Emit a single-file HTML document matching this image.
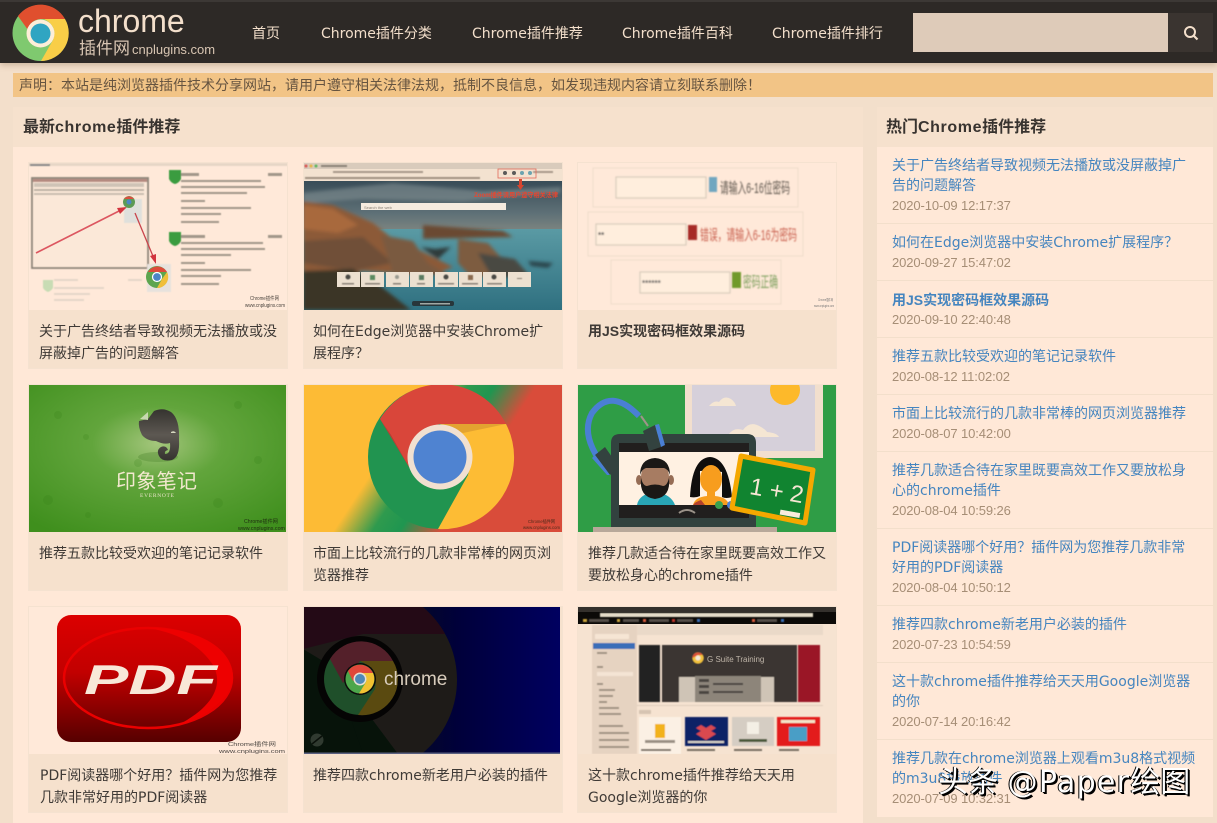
<!DOCTYPE html>
<html lang="zh"><head><meta charset="utf-8"><title>chrome插件网</title>
<style>
*{margin:0;padding:0;box-sizing:border-box}
html,body{width:1217px;height:823px;overflow:hidden;background:#f3dfcb}
body{position:relative;font-family:"Liberation Sans","Noto Sans CJK SC",sans-serif;font-size:14px;color:#3f3a36}
.a{position:absolute;white-space:nowrap}
#hd{left:0;top:0;width:1217px;height:63px;background:#2d2926;border-top:2px solid #3c3835;box-shadow:0 2px 6px rgba(90,60,30,.28)}
.nav{top:24px;height:20px;line-height:20px;color:#f3dfcb;font-size:14px;font-family:"DejaVu Sans","Noto Sans CJK SC",sans-serif}
#side-l{left:13px;top:107px;width:850px;height:716px;background:#ffe8d7}
.hh{height:40px;background:#f6e1cd;font-size:16px;font-weight:bold;line-height:42px;color:#38332f}
.hh i{font-style:normal;letter-spacing:.6px}
.card{position:absolute;width:260px;height:207px;background:#f6e1cd;border:1px solid #f5e2d0}
.card svg{position:absolute;left:0;top:0;display:block;width:258px;height:147px}
.card p{position:absolute;left:10px;top:158px;line-height:22px;white-space:nowrap;font-size:14px;color:#3f3a36;font-family:"DejaVu Sans","Noto Sans CJK SC",sans-serif}
.it{position:absolute;left:877px;width:336px;border-top:1px solid #f3dfcb;padding-left:15px;padding-top:9px}
.it a{display:block;color:#4585bf;line-height:20px;font-size:14px;white-space:nowrap;font-family:"DejaVu Sans","Noto Sans CJK SC",sans-serif}
.it span{display:block;color:#a68e76;line-height:20px;font-size:13px;white-space:nowrap;letter-spacing:-.1px}
#wm{left:938px;top:763px;font-size:30px;line-height:40px;color:#fff;text-shadow:2px 2px 0 #000,1px 1px 0 #000,-1px 0 0 #000;font-family:"DejaVu Sans","Noto Sans CJK SC",sans-serif}
#wm i{font-style:normal;letter-spacing:1.300px}
</style></head><body>

<div class="a" id="hd"></div>
<svg class="a" style="left:12px;top:4px" width="58" height="58" viewBox="0 0 58 58">
<circle cx="28.500" cy="29" r="28" fill="#7fc96f"/>
<path d="M6 12A28 28 0 0 1 53 15L28.500 15Q18 16 16 26Z" fill="#e04f2e"/>
<path d="M53 15A28 28 0 0 1 29 57L41 36Q46 22 32 15Z" fill="#f9ce47"/>
<circle cx="28.500" cy="29.500" r="14" fill="#fdeed8"/><circle cx="28.500" cy="29.500" r="10" fill="#30a5c2"/>
</svg>
<div class="a" style="left:78px;top:1px;font-size:32px;line-height:40px;color:#f3dfcb">chrome</div>
<div class="a" style="left:79px;top:37px;font-size:17px;line-height:24px;color:#d8c5b2">插件网<span style="font-size:13px;margin-left:2px">cnplugins.com</span></div>
<div class="a nav" style="left:252px">首页</div>
<div class="a nav" style="left:321px">Chrome插件分类</div>
<div class="a nav" style="left:472px">Chrome插件推荐</div>
<div class="a nav" style="left:622px">Chrome插件百科</div>
<div class="a nav" style="left:772px">Chrome插件排行</div>
<div class="a" style="left:913px;top:13px;width:255px;height:39px;background:#decbb9"></div>
<div class="a" style="left:1168px;top:13px;width:45px;height:39px;background:#3a3430"></div>
<svg class="a" style="left:1183px;top:25px" width="16" height="16" viewBox="0 0 16 16"><circle cx="7" cy="7" r="5" fill="none" stroke="#f3dfcb" stroke-width="2"/><path d="M10.500 10.500L14.500 14.500" stroke="#f3dfcb" stroke-width="2.200"/></svg>

<div class="a" style="left:13px;top:73px;width:1200px;height:24px;background:#f2c486;line-height:24px;padding-left:6px;color:#665440">声明&#xFF1A;本站是纯浏览器插件技术分享网站&#xFF0C;请用户遵守相关法律法规&#xFF0C;抵制不良信息&#xFF0C;如发现违规内容请立刻联系删除&#xFF01;</div>

<div class="a" id="side-l"><div class="hh" style="padding-left:10px">最新<i>chrome</i>插件推荐</div></div>
<div class="a hh" style="left:877px;top:107px;width:336px;padding-left:9px">热门<i>Chrome</i>插件推荐</div>
<div class="a" style="left:877px;top:147px;width:336px;height:670px;background:#ffe8d7"></div>

<!-- Card 1 -->
<div class="card" style="left:28px;top:162px">
<svg viewBox="1 0 258 147"><rect width="260" height="147" fill="#ffe9d9"/>
<g filter="url(#b1)">
<rect width="260" height="3" fill="#e6d6c6"/><rect x="2" y="1" width="20" height="2" fill="#888"/>
<rect x="4" y="15" width="116" height="90" fill="#fbe8d8" stroke="#8d8478" stroke-width="1.800"/>
<rect x="5" y="16" width="114" height="3" fill="#b58a80"/><rect x="6" y="20" width="110" height="4" fill="#cfc3b6"/><rect x="6" y="26" width="110" height="2" fill="#bcb0a3"/><rect x="6" y="30" width="110" height="2" fill="#c8bcaf"/>
<g fill="#3a9c40"><path d="M141 7h12v9q-2 4-6 5q-4-1-6-5z"/><path d="M141 69h12v9q-2 4-6 5q-4-1-6-5z"/></g>
<path d="M15 117h10v8q-2 3-5 4q-3-1-5-4z" fill="#c8dcb4"/>
<g fill="#a2978a"><rect x="153" y="10" width="18" height="3"/><rect x="153" y="17" width="80" height="2"/><rect x="153" y="23" width="84" height="2"/><rect x="153" y="29" width="66" height="2"/><rect x="153" y="37" width="24" height="2"/><rect x="153" y="44" width="70" height="2"/><rect x="153" y="50" width="40" height="2"/><rect x="153" y="58" width="38" height="2"/><rect x="240" y="10" width="14" height="3"/>
<rect x="153" y="72" width="24" height="3"/><rect x="153" y="79" width="82" height="2"/><rect x="153" y="85" width="84" height="2"/><rect x="153" y="91" width="50" height="2"/><rect x="153" y="99" width="24" height="2"/><rect x="153" y="106" width="70" height="2"/><rect x="153" y="112" width="40" height="2"/><rect x="153" y="120" width="38" height="2"/><rect x="240" y="72" width="14" height="3"/></g>
<g fill="#e5d7c8"><rect x="26" y="116" width="24" height="2"/><rect x="26" y="124" width="50" height="2"/><rect x="26" y="130" width="36" height="2"/><rect x="26" y="136" width="30" height="2"/><rect x="100" y="116" width="14" height="2"/></g>
<rect x="96" y="36" width="18" height="24" fill="#dfe0dc"/>
</g>
<path d="M8 90L97 45" stroke="#dc5660" stroke-width="1.600"/><path d="M99 44L89 45L92 51Z" fill="#d2343e"/>
<path d="M107 50L127 98" stroke="#c9444c" stroke-width="1.300"/><path d="M128 101L122 93L128 91Z" fill="#d2343e"/>
<circle cx="101" cy="39" r="6" fill="#5c9a55"/><path d="M96 36a6 6 0 0 1 10 0h-5z" fill="#d9503f"/><circle cx="101" cy="39" r="2.500" fill="#4c86c6"/>
<rect x="119" y="101" width="24" height="28" fill="#e7e2dd" filter="url(#b1)"/>
<circle cx="129" cy="114" r="11" fill="#5da54f"/><path d="M120 109a11 11 0 0 1 19 0h-10z" fill="#dd4b3a"/><path d="M139 109a11 11 0 0 1-10 16l5-9z" fill="#f0bf3a"/><circle cx="129" cy="114" r="4.500" fill="#4c86c6" stroke="#fff" stroke-width="1.200"/>
<text x="222" y="137" font-size="5" fill="#4c453f" textLength="29" lengthAdjust="spacingAndGlyphs">Chrome插件网</text><text x="217" y="144" font-size="5" fill="#4c453f" textLength="40" lengthAdjust="spacingAndGlyphs">www.cnplugins.com</text>
</svg><p>关于广告终结者导致视频无法播放或没<br>屏蔽掉广告的问题解答</p></div>

<!-- Card 2 -->
<div class="card" style="left:303px;top:162px">
<svg viewBox="1 0 258 147"><defs>
<linearGradient id="sk" x1="0" y1="0" x2="0" y2="1"><stop offset="0" stop-color="#384c57"/><stop offset=".55" stop-color="#5f7177"/><stop offset="1" stop-color="#8f9186"/></linearGradient>
<linearGradient id="wt" x1="0" y1="0" x2="0" y2="1"><stop offset="0" stop-color="#5a9aa4"/><stop offset="1" stop-color="#2f7080"/></linearGradient>
<filter id="b1"><feGaussianBlur stdDeviation=".5"/></filter><filter id="b2"><feGaussianBlur stdDeviation="1.800"/></filter><filter id="b3"><feGaussianBlur stdDeviation=".8"/></filter>
</defs>
<rect y="18" width="260" height="60" fill="url(#sk)"/><rect y="66" width="260" height="81" fill="url(#wt)"/>
<g filter="url(#b2)">
<path d="M0 30L90 20L180 28L258 24V30L160 38L60 36L0 40Z" fill="#8d9a9c" opacity=".5"/>
<path d="M120 62L200 68L210 74L120 76Z" fill="#6a4a30"/>
<path d="M0 38L30 42L70 60L95 80L118 88L150 104L130 112L60 108L0 118Z" fill="#8c5a38"/>
<path d="M0 42L30 46L55 62L35 70L0 66Z" fill="#a8693c"/>
<path d="M0 78L60 74L90 100L50 108L0 100Z" fill="#6f5038"/>
<path d="M78 72L110 78L125 100L145 112L90 112Z" fill="#7a5a40"/>
<path d="M155 76L185 80L210 108L170 116L155 100Z" fill="#7d5c40"/>
<path d="M175 90L212 96L226 112L190 116Z" fill="#4a4a42"/>
<path d="M0 108L50 106L80 125L108 147H0Z" fill="#3a3528"/>
<path d="M118 84L132 86L148 84L135 96Z" fill="#2f3a3a"/>
<path d="M225 98L250 100L245 105L228 103Z" fill="#2c444c"/>
</g>
<rect width="260" height="18" fill="#f3e2d0"/><rect width="260" height="6" fill="#d9cbbc"/>
<g filter="url(#b1)"><circle cx="3" cy="3" r="1.500" fill="#d9534f"/><circle cx="8" cy="3" r="1.500" fill="#e7b33f"/><circle cx="13" cy="3" r="1.500" fill="#5cb65c"/><rect x="18" y="2" width="26" height="2" fill="#8d8478"/><rect x="30" y="8" width="90" height="2" fill="#a89a8b"/><rect x="2" y="14" width="175" height="2" fill="#a09282"/><rect x="230" y="8" width="20" height="2" fill="#a89a8b"/></g>
<rect x="195" y="6" width="38" height="9" fill="none" stroke="#e26a5a" stroke-width=".8"/><g fill="#5a5a5a"><circle cx="202" cy="10" r="2"/><circle cx="211" cy="10" r="2"/><circle cx="219" cy="10" r="2" fill="#6ba3b0"/><circle cx="227" cy="10" r="2" fill="#6ba3b0"/></g>
<path d="M216 16h3v6h2l-3.500 5l-3.500-5h2z" fill="#d6452f"/>
<text x="171" y="34" font-size="6.500" font-weight="bold" fill="#e8452f" textLength="84" lengthAdjust="spacingAndGlyphs">Zoom插件请用户遵守相关法律</text>
<rect x="58" y="40" width="145" height="7" fill="#f5ebdf"/><text x="61" y="46" font-size="4" fill="#8a8177">Search the web</text>
<g fill="#ece0d0">
<rect x="34" y="109" width="23" height="15"/><rect x="58" y="109" width="23" height="15"/><rect x="83" y="109" width="23" height="15"/><rect x="107" y="109" width="23" height="15"/><rect x="132" y="109" width="23" height="15"/><rect x="156" y="109" width="23" height="15"/><rect x="180" y="109" width="23" height="15"/><rect x="205" y="109" width="23" height="15"/></g>
<g fill="#4a4a44" filter="url(#b1)"><circle cx="45" cy="114" r="2.500"/><rect x="67" y="112" width="5" height="5" fill="#5a8a60"/><circle cx="94" cy="114" r="2" fill="#9a9a90"/><rect x="116" y="112" width="5" height="5" fill="#5a7a60"/><circle cx="143" cy="114" r="2.500"/><rect x="165" y="112" width="5" height="5" fill="#8a6a50"/><circle cx="191" cy="114" r="2.500"/><rect x="39" y="120" width="12" height="1.500" fill="#8a8177"/><rect x="62" y="120" width="15" height="1.500" fill="#8a8177"/><rect x="90" y="120" width="8" height="1.500" fill="#8a8177"/><rect x="114" y="120" width="8" height="1.500" fill="#8a8177"/><rect x="135" y="120" width="16" height="1.500" fill="#8a8177"/><rect x="159" y="120" width="16" height="1.500" fill="#8a8177"/><rect x="184" y="120" width="15" height="1.500" fill="#8a8177"/><rect x="214" y="115" width="5" height="1" fill="#8a8177"/></g>
<rect x="109" y="138" width="42" height="5" rx="2" fill="#28363a"/><rect x="117" y="140" width="30" height="1.500" fill="#a0a8a4"/>
</svg><p style="left:9px">如何在Edge浏览器中安装Chrome扩<br>展程序&#xFF1F;</p></div>

<!-- Card 3 -->
<div class="card" style="left:577px;top:162px">
<svg viewBox="1 0 258 147"><rect width="260" height="147" fill="#ffe9d9"/>
<g filter="url(#b3)">
<rect x="16" y="5" width="205" height="39" fill="none" stroke="#efdccb"/><rect x="39" y="14" width="90" height="21" fill="#ffeedd" stroke="#d8cbbb" stroke-width="1.200"/><rect x="132" y="14" width="8" height="15" fill="#6fa6c0"/>
<text x="143" y="30" font-size="15" fill="#5e564e" textLength="70" lengthAdjust="spacingAndGlyphs">请输入6-16位密码</text>
<rect x="11" y="49" width="215" height="44" fill="none" stroke="#efdccb"/><rect x="19" y="61" width="90" height="21" fill="#ffeedd" stroke="#d8cbbb" stroke-width="1.200"/><rect x="111" y="62" width="9" height="15" fill="#a62c28"/>
<text x="21" y="75" font-size="8" font-weight="bold" fill="#444">**</text>
<text x="123" y="77" font-size="15" fill="#c9604f" textLength="97" lengthAdjust="spacingAndGlyphs">错误&#xFF0C;请输入6-16为密码</text>
<rect x="34" y="97" width="170" height="44" fill="none" stroke="#efdccb"/><rect x="63" y="109" width="90" height="21" fill="#ffeedd" stroke="#d8cbbb" stroke-width="1.200"/><rect x="155" y="109" width="9" height="16" fill="#6f9a2c"/>
<text x="65" y="123" font-size="8" font-weight="bold" fill="#555">******</text>
<text x="166" y="124" font-size="15" fill="#7ea05e" textLength="35" lengthAdjust="spacingAndGlyphs">密码正确</text>
</g>
<text x="241" y="138" font-size="3.500" fill="#777" textLength="15" lengthAdjust="spacingAndGlyphs">Chrome插件网</text><text x="237" y="144" font-size="3.500" fill="#777" textLength="20" lengthAdjust="spacingAndGlyphs">www.cnplugins.com</text>
</svg><p style="font-weight:bold;top:157px;font-family:'Liberation Sans','Noto Sans CJK SC',sans-serif">用JS实现密码框效果源码</p></div>

<!-- Card 4 -->
<div class="card" style="left:28px;top:384px">
<svg viewBox="1 0 258 147"><defs><radialGradient id="ev" cx=".5" cy=".4" r=".72"><stop offset="0" stop-color="#a4c67c"/><stop offset=".35" stop-color="#62a53c"/><stop offset="1" stop-color="#3f8f1d"/></radialGradient><linearGradient id="el" x1="0" y1="0" x2="0" y2="1"><stop offset="0" stop-color="#35332f"/><stop offset=".5" stop-color="#5d5852"/><stop offset="1" stop-color="#35332f"/></linearGradient></defs>
<rect width="258" height="147" fill="url(#ev)"/>
<g fill="#2f7a12" opacity=".18"><circle cx="58" cy="52" r="3"/><circle cx="20" cy="115" r="5"/><circle cx="230" cy="75" r="4"/><circle cx="110" cy="78" r="4"/><circle cx="210" cy="20" r="4"/><circle cx="60" cy="130" r="3"/><circle cx="190" cy="118" r="5"/><circle cx="30" cy="30" r="4"/></g>
<ellipse cx="130" cy="72" rx="20" ry="5" fill="#417a25" opacity=".3"/>
<path d="M126 26Q135 22 143 27Q152 34 151 55Q152 72 144 75Q134 77 131 71Q128 65 133 62Q138 60 140 65Q136 66 137 69Q143 69 142 58Q136 60 128 56Q119 56 114 50Q110 42 111 36L120 34Z" fill="url(#el)"/>
<path d="M112 34L120 27L120 35Z" fill="#c8d8b0"/><path d="M143 47q3-2 5 1h-5z" fill="#d6d8c0"/>
<text x="88" y="103" font-size="20" fill="#f3e8cf" textLength="81" lengthAdjust="spacing">印象笔记</text>
<text x="112" y="112" font-size="5.500" font-family="Liberation Serif,serif" fill="#e9e4c8" textLength="34">EVERNOTE</text>
<text x="216" y="138" font-size="5" fill="#1d2b10" textLength="34" lengthAdjust="spacingAndGlyphs">Chrome插件网</text><text x="210" y="145" font-size="5" fill="#1d2b10" textLength="47" lengthAdjust="spacingAndGlyphs">www.cnplugins.com</text>
</svg><p>推荐五款比较受欢迎的笔记记录软件</p></div>

<!-- Card 5 -->
<div class="card" style="left:303px;top:384px">
<svg viewBox="1 0 258 147"><defs>
<linearGradient id="cb" gradientUnits="userSpaceOnUse" x1="0" y1="0" x2="210" y2="137.500"><stop offset=".42" stop-color="#fdbb35"/><stop offset=".55" stop-color="#2f9a4e"/><stop offset=".64" stop-color="#1f9650"/><stop offset=".78" stop-color="#d94c3a"/></linearGradient>
</defs>
<rect width="260" height="147" fill="url(#cb)"/>
<circle cx="137" cy="72" r="72" fill="#219450"/>
<path d="M77 34A72 72 0 0 1 203 39L137 39Q120 42 106 82Z" fill="#d9463a"/>
<path d="M203 39A72 72 0 0 1 135 144L165 90Q175 50 137 39Z" fill="#fdbc34"/>
<path d="M137 39L203 39L160 48Z" fill="#e0a030" opacity=".9"/>
<path d="M77 34L106 82L88 50Z" fill="#b23e33"/>
<circle cx="137" cy="72" r="32.500" fill="#f1e0d0"/><circle cx="137" cy="72" r="26.500" fill="#4f83d1"/>
<text x="225" y="138" font-size="4.500" fill="#4a2a1a" textLength="27" lengthAdjust="spacingAndGlyphs">Chrome插件网</text><text x="220" y="144" font-size="4.500" fill="#4a2a1a" textLength="37" lengthAdjust="spacingAndGlyphs">www.cnplugins.com</text>
</svg><p style="left:9px">市面上比较流行的几款非常棒的网页浏<br>览器推荐</p></div>

<!-- Card 6 -->
<div class="card" style="left:577px;top:384px">
<svg viewBox="1 0 258 147"><rect width="260" height="147" fill="#2f9d46"/>
<rect x="108" width="138" height="73" fill="#f2dfcd"/><rect x="115" width="123" height="66" fill="#d6d0da"/>
<circle cx="208" cy="5" r="15" fill="#fdb92a"/>
<g fill="#f5e6d3"><path d="M132 21q5-6 10-4q5-7 12-3q4 3 5 7z"/><path d="M152 49q5-7 14-4q7-10 18-3q5 3 6 5q10 1 12 5h-50z"/></g>
<path d="M34 58q0-9 9-9h127q9 0 9 9v84H34z" fill="#32423f"/>
<rect x="42" y="58" width="130" height="9" fill="#211f1e"/><rect x="42" y="67" width="130" height="53" fill="#fff1e2"/><rect x="42" y="120" width="130" height="13" fill="#211f1e"/>
<path d="M60 120q2-11 18-13q16 2 20 13z" fill="#29a6b6"/>
<ellipse cx="78" cy="92" rx="14" ry="16" fill="#a77c62"/><ellipse cx="62" cy="95" rx="3" ry="5" fill="#966d55"/><ellipse cx="94" cy="95" rx="3" ry="5" fill="#966d55"/>
<path d="M63 90q0-16 15-17q15 1 15 17q-2-6-6-7h-18q-4 1-6 7z" fill="#1a1816"/>
<path d="M64 93q2 8 6 8q8-3 16 0q4 0 6-8q2 19-14 21q-16-2-14-21z" fill="#1a1816"/>
<path d="M113 112q2-39 20-40q18 1 22 40q-6 2-10 0v-25q-10-2-22-1v25q-4 2-10 1z" fill="#0f0e0d"/>
<ellipse cx="134" cy="94" rx="11" ry="14" fill="#f79d1e"/><rect x="130" y="104" width="8" height="8" fill="#f79d1e"/>
<path d="M116 120q2-8 14-9h8q12 1 14 9z" fill="#f79d1e"/><path d="M116 120q2-3 8-5l4 5z" fill="#b3412c"/>
<circle cx="142" cy="120" r="4" fill="#3aa14f"/><circle cx="154" cy="120" r="4" fill="#4a7fd4"/>
<path d="M102 128q8-6 16 0" stroke="#9a9288" stroke-width="2" fill="none"/>
<rect x="16" y="142" width="184" height="5" fill="#b8a89a"/>
<path d="M30 85Q2 52 15 28Q34 2 62 31" fill="none" stroke="#4a7fd4" stroke-width="6"/>
<path d="M64 31l7 10M26 64l2 8" stroke="#a0938a" stroke-width="2"/>
<path d="M66 46L78 40L84 62L72 66Z" fill="#33423f"/><path d="M78 40L82 39L88 60L84 62Z" fill="#4a7fd4"/>
<path d="M18 70L28 62L42 82L33 90Z" fill="#33423f"/><path d="M18 70L15 73L30 90L33 90Z" fill="#4a7fd4"/>
<path d="M164 71L236 85L228 138L155 123Z" fill="#118430" stroke="#f5a800" stroke-width="5" stroke-linejoin="round"/>
<g transform="rotate(10 196 104)"><text x="173" y="113" font-size="24" fill="#f5e6d3">1 + 2</text><rect x="207" y="123" width="20" height="5" fill="#f9ecdc"/></g>
</svg><p>推荐几款适合待在家里既要高效工作又<br>要放松身心的chrome插件</p></div>

<!-- Card 7 -->
<div class="card" style="left:28px;top:606px">
<svg viewBox="1 0 258 147"><defs><linearGradient id="pd" x1="0" y1="0" x2="0" y2="1"><stop offset="0" stop-color="#dc0000"/><stop offset=".45" stop-color="#c20000"/><stop offset="1" stop-color="#560000"/></linearGradient></defs>
<rect width="260" height="147" fill="#ffe9d9"/>
<rect x="29" y="8" width="184" height="127" rx="14" fill="url(#pd)"/>
<ellipse cx="120" cy="71" rx="84" ry="50" fill="none" stroke="#ea0000" stroke-width="2.500"/>
<path d="M120 21C170 20 206 42 205 71C204 90 180 110 150 118C185 100 196 78 185 58C172 38 150 26 120 21Z" fill="#ee0000"/>
<text x="56" y="87" font-size="42" font-weight="bold" font-style="italic" fill="#f8e8d8" textLength="133" lengthAdjust="spacingAndGlyphs">PDF</text>
<text x="200" y="139" font-size="5.500" fill="#4a4540" textLength="48" lengthAdjust="spacingAndGlyphs">Chrome插件网</text><text x="191" y="146" font-size="5.500" fill="#4a4540" textLength="66" lengthAdjust="spacingAndGlyphs">www.cnplugins.com</text>
</svg><p style="left:11px">PDF阅读器哪个好用&#xFF1F;插件网为您推荐<br>几款非常好用的PDF阅读器</p></div>

<!-- Card 8 -->
<div class="card" style="left:303px;top:606px">
<svg viewBox="1 0 258 147"><defs><linearGradient id="nv" x1="0" y1="0" x2="1" y2="0"><stop offset=".4" stop-color="#050a24"/><stop offset=".6" stop-color="#00003a"/><stop offset="1" stop-color="#000060"/></linearGradient><clipPath id="bc"><circle cx="59" cy="73" r="95"/></clipPath></defs>
<rect width="257" height="147" fill="url(#nv)"/>
<g clip-path="url(#bc)"><rect width="260" height="147" fill="#1e1b18"/><path d="M0 0H160V27H60L0 42Z" fill="#240a16"/><path d="M0 42L30 60L70 147H0Z" fill="#07130a"/><path d="M30 60L60 100L95 147H60Z" fill="#07130a"/></g>
<circle cx="57" cy="72" r="43" fill="#050404"/>
<circle cx="57" cy="72" r="36" fill="#1f4f2a"/>
<path d="M27 52A36 36 0 0 1 90 54H57L40 76Z" fill="#54202a"/>
<path d="M90 54A36 36 0 0 1 55 108L72 82Q76 62 57 54Z" fill="#5a4a10"/>
<circle cx="57" cy="72" r="16" fill="#0c0b0a"/><circle cx="57" cy="72" r="14.500" fill="#4da64b"/>
<path d="M45 64A14.500 14.500 0 0 1 70 66H58L50 74Z" fill="#e0473a"/><path d="M70 66A14.500 14.500 0 0 1 56 86.500L63 75Q65 68 58 66Z" fill="#f1c232"/>
<circle cx="57" cy="72" r="6.500" fill="#e8e0d4"/><circle cx="57" cy="72" r="5" fill="#4f8ab8"/>
<text x="81" y="78" font-size="19" fill="#d8ccbc">chrome</text>
<circle cx="14" cy="133" r="6.500" fill="#303a30"/><path d="M9 137L19 129" stroke="#0a100a" stroke-width="1.500"/>
<rect y="145.500" width="257" height="1.500" fill="#5a6080"/>
</svg><p style="left:9px">推荐四款chrome新老用户必装的插件</p></div>

<!-- Card 9 -->
<div class="card" style="left:577px;top:606px">
<svg viewBox="1 0 258 147"><rect width="260" height="147" fill="#f6e3d1"/>
<rect width="260" height="17" fill="#0c0a08"/><rect width="260" height="5" fill="#34302c"/>
<g filter="url(#b1)">
<rect x="23" y="6" width="213" height="4" fill="#e4dbc8"/>
<g fill="#c9a53c"><rect x="6" y="12" width="4" height="3"/><rect x="40" y="12" width="3" height="3"/><rect x="66" y="12" width="3" height="3" fill="#d65a3a"/><rect x="95" y="12" width="3" height="3" fill="#c0342c"/><rect x="120" y="12" width="3" height="3" fill="#3a6eb8"/><rect x="175" y="12" width="3" height="3" fill="#d65a3a"/><rect x="204" y="12" width="3" height="3" fill="#3a6eb8"/><rect x="12" y="12" width="20" height="3" fill="#55504a"/><rect x="46" y="12" width="16" height="3" fill="#55504a"/><rect x="72" y="12" width="20" height="3" fill="#55504a"/><rect x="100" y="12" width="16" height="3" fill="#55504a"/><rect x="180" y="12" width="20" height="3" fill="#55504a"/></g>
<rect x="15" y="18" width="45" height="129" fill="#e6d3c1"/><rect x="60" y="18" width="186" height="10" fill="#ead9c8"/>
<rect x="18" y="27" width="34" height="5" fill="#f6e5d4"/>
<rect x="16" y="36" width="42" height="6" fill="#3a6eb8"/>
<g fill="#a09282"><rect x="20" y="45" width="10" height="2"/><rect x="20" y="59" width="6" height="2"/><rect x="20" y="65" width="36" height="4" fill="#f4e4d4"/><rect x="20" y="76" width="6" height="2"/><rect x="22" y="82" width="16" height="2"/><rect x="22" y="88" width="14" height="2"/><rect x="22" y="94" width="8" height="2"/><rect x="22" y="100" width="20" height="2"/><rect x="22" y="106" width="22" height="2"/><rect x="22" y="118" width="24" height="2"/><rect x="22" y="125" width="30" height="2"/><rect x="22" y="132" width="30" height="2"/><rect x="22" y="139" width="30" height="2"/></g>
<rect x="62" y="38" width="21" height="57" fill="#242220"/><rect x="85" y="38" width="135" height="57" fill="#3a3532"/><rect x="221" y="38" width="22" height="57" fill="#9a1226"/>
<rect x="102" y="70" width="95" height="25" fill="#cfc4b6"/><rect x="118" y="64" width="66" height="31" fill="#8d857a"/><rect x="118" y="64" width="66" height="5" fill="#3a3532"/><g fill="#4a4540"><rect x="122" y="72" width="10" height="3"/><rect x="122" y="78" width="10" height="3"/><rect x="122" y="84" width="10" height="3"/><rect x="136" y="76" width="30" height="2"/><rect x="136" y="84" width="30" height="2"/></g>
<rect x="60" y="98" width="186" height="1" fill="#e0cebc"/><rect x="62" y="103" width="12" height="4" fill="#d6c4b2"/>
<rect x="62" y="110" width="42" height="37" fill="#fbf0e4"/><rect x="108" y="110" width="43" height="29" fill="#0d2166"/><rect x="155" y="110" width="42" height="29" fill="#d5cdc3"/><rect x="200" y="110" width="43" height="29" fill="#e31b1b"/>
<rect x="78" y="117" width="10" height="14" fill="#f2b21c"/><path d="M124 118l5 3l5-3l5 3l-5 3l5 3l-10 6l-10-6l5-3l-5-3z" fill="#d9484f"/><rect x="170" y="115" width="12" height="12" fill="#f4efe5"/><rect x="212" y="120" width="18" height="14" fill="#4a9ec6"/><rect x="204" y="113" width="34" height="3" fill="#f3e4c8"/>
<rect x="68" y="133" width="30" height="3" fill="#9a9084"/><rect x="111" y="134" width="36" height="2" fill="#d6d0c8"/><rect x="162" y="132" width="28" height="3" fill="#4c5a3a"/>
<g fill="#7a7064"><rect x="64" y="142" width="30" height="2"/><rect x="110" y="142" width="28" height="2"/><rect x="157" y="142" width="28" height="2"/><rect x="202" y="142" width="20" height="2"/></g>
<circle cx="121" cy="51" r="5.500" fill="#f3c33c"/><path d="M115.500 51a5.500 5.500 0 0 1 10-3h-5z" fill="#dd4b3a"/><circle cx="121" cy="51" r="2.500" fill="#f3e8da"/>
</g>
<text x="130" y="55" font-size="8" fill="#bfb5a8">G Suite Training</text>
</svg><p>这十款chrome插件推荐给天天用<br>Google浏览器的你</p></div>

<!-- Sidebar -->
<div class="it" style="top:147px;border-top:0;padding-top:9px"><a>关于广告终结者导致视频无法播放或没屏蔽掉广<br>告的问题解答</a><span>2020-10-09 12:17:37</span></div>
<div class="it" style="top:223px"><a>如何在Edge浏览器中安装Chrome扩展程序&#xFF1F;</a><span>2020-09-27 15:47:02</span></div>
<div class="it" style="top:280px"><a style="font-weight:bold;font-family:'Liberation Sans','Noto Sans CJK SC',sans-serif">用JS实现密码框效果源码</a><span>2020-09-10 22:40:48</span></div>
<div class="it" style="top:337px"><a>推荐五款比较受欢迎的笔记记录软件</a><span>2020-08-12 11:02:02</span></div>
<div class="it" style="top:394px"><a>市面上比较流行的几款非常棒的网页浏览器推荐</a><span>2020-08-07 10:42:00</span></div>
<div class="it" style="top:451px"><a>推荐几款适合待在家里既要高效工作又要放松身<br>心的chrome插件</a><span>2020-08-04 10:59:26</span></div>
<div class="it" style="top:528px"><a>PDF阅读器哪个好用&#xFF1F;插件网为您推荐几款非常<br>好用的PDF阅读器</a><span>2020-08-04 10:50:12</span></div>
<div class="it" style="top:605px"><a>推荐四款chrome新老用户必装的插件</a><span>2020-07-23 10:54:59</span></div>
<div class="it" style="top:662px"><a>这十款chrome插件推荐给天天用Google浏览器<br>的你</a><span>2020-07-14 20:16:42</span></div>
<div class="it" style="top:739px"><a>推荐几款在chrome浏览器上观看m3u8格式视频<br>的m3u8播放插件</a><span>2020-07-09 10:32:31</span></div>

<div class="a" id="wm">头条 <i>@Paper</i>绘图</div>
</body></html>
